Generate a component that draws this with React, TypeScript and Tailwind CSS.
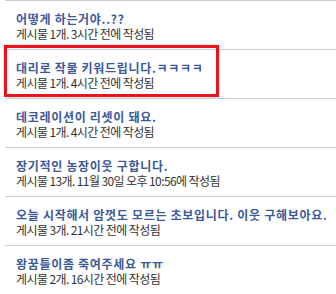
import React from "react";

const items = [
  { title: "어떻게 하는거야..??", sub: "게시물 1개. 3시간 전에 작성됨" },
  { title: "대리로 작물 키워드립니다.ㅋㅋㅋㅋ", sub: "게시물 1개. 4시간 전에 작성됨" },
  { title: "데코레이션이 리셋이 돼요.", sub: "게시물 1개. 4시간 전에 작성됨" },
  { title: "장기적인 농장이웃 구합니다.", sub: "게시물 13개. 11월 30일 오후 10:56에 작성됨" },
  { title: "오늘 시작해서 암껏도 모르는 초보입니다. 이웃 구해보아요.", sub: "게시물 3개. 21시간 전에 작성됨" },
  { title: "왕꿈틀이좀 죽여주세요 ㅠㅠ", sub: "게시물 2개. 16시간 전에 작성됨" },
];

export default function App() {
  return (
    <div
      className="relative w-[336px] h-[294px] overflow-hidden bg-white"
      style={{ fontFamily: '"Noto Sans CJK KR", "Noto Sans", sans-serif' }}
    >
      <ul className="pl-[5px]">
        {items.map((it, i) => (
          <li key={i} className="flex h-[49px] flex-col border-t border-[#cccccc] pl-[11px] pt-[11px]">
            <div className="h-[14px] text-[12px] leading-[14px] font-bold tracking-[0.7px] text-[#3b5998] whitespace-nowrap">{it.title}</div>
            <div className="h-[14px] text-[12px] leading-[15px] tracking-[-0.6px] text-[#333333] whitespace-nowrap">{it.sub}</div>
          </li>
        ))}
      </ul>
      <div className="absolute left-[4px] top-[45px] w-[215px] h-[52px] border-[3px] border-[#e8141b] shadow-[0_0_1px_#ff8080]" />
    </div>
  );
}
